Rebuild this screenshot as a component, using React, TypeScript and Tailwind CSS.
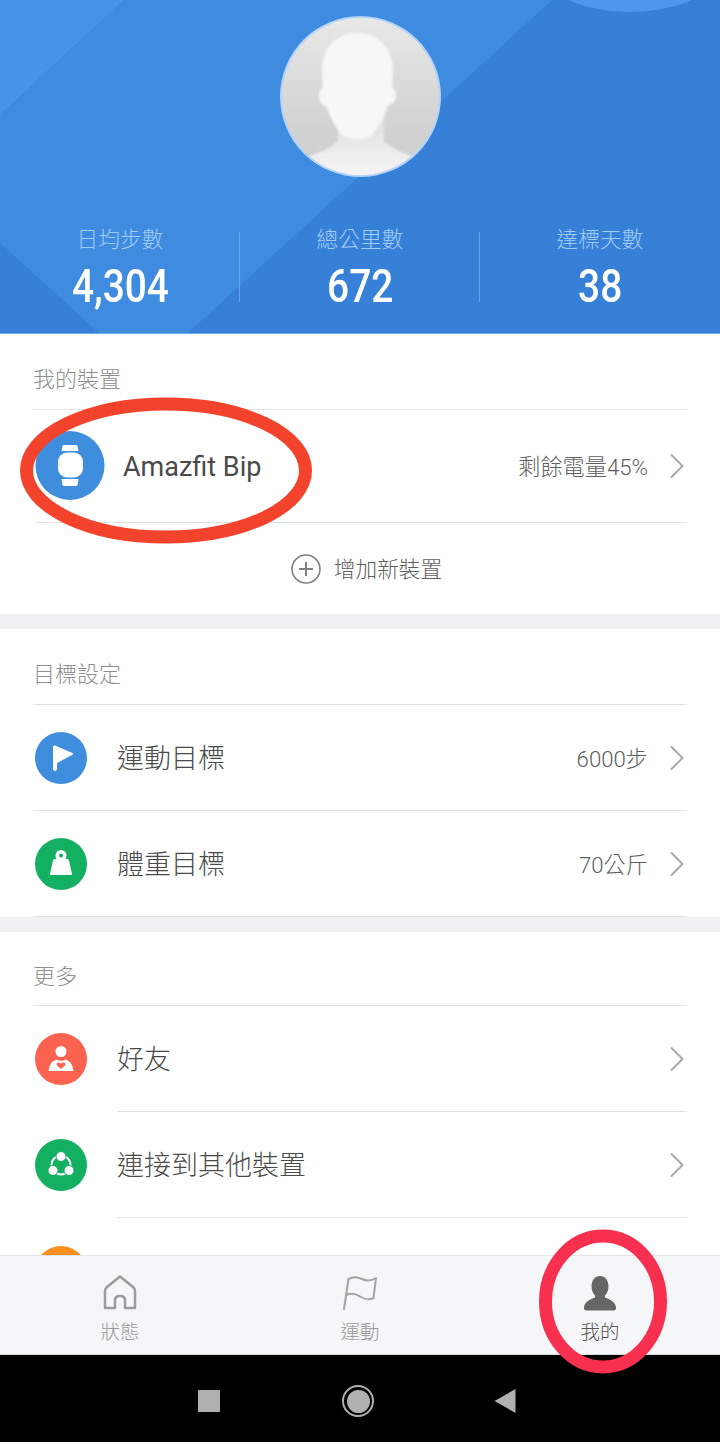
import { ChevronRight } from "lucide-react";
import type { ReactNode } from "react";

const FONT = { fontFamily: 'Roboto, "Noto Sans CJK TC", sans-serif' };

/* ── Icons ───────────────────────────────────────────────── */
function WatchIcon() {
  return (
    <svg viewBox="0 0 70 70" className="w-full h-full">
      <circle cx="35" cy="34.500" r="34.500" fill="#3f8ede" />
      <path d="M26.500 20l.8-4.500q.3-1.500 1.800-1.500h11.800q1.500 0 1.800 1.500l.8 4.500z" fill="#fff" />
      <path d="M26.500 48l.8 5.500q.3 1.500 1.800 1.500h11.800q1.500 0 1.800-1.500l.8-5.500z" fill="#fff" />
      <rect x="23" y="21.500" width="25" height="25" rx="9" fill="#fff" />
    </svg>
  );
}

function FlagIcon() {
  return (
    <svg viewBox="0 0 52 52" className="w-full h-full">
      <circle cx="26" cy="26" r="26" fill="#3f8ede" />
      <path d="M18 15q0-2 2-1.500l17.500 7.500q1.500.9 0 1.800L22 31v6q0 2-2 2t-2-2z" fill="#fff" />
    </svg>
  );
}

function WeightIcon() {
  return (
    <svg viewBox="0 0 52 52" className="w-full h-full">
      <circle cx="26" cy="26" r="26" fill="#14b061" />
      <circle cx="26" cy="17.500" r="5.500" fill="#fff" />
      <path d="M19.500 21h13q1.200 0 1.500 1.500l3 13.500q.2 1-1 1H16q-1.200 0-1-1l3-13.500q.3-1.500 1.500-1.500z" fill="#fff" />
      <circle cx="26" cy="17.500" r="2" fill="#14b061" />
    </svg>
  );
}

function FriendIcon() {
  return (
    <svg viewBox="0 0 52 52" className="w-full h-full">
      <circle cx="26" cy="26" r="26" fill="#fb6350" />
      <circle cx="26" cy="18.500" r="5.500" fill="#fff" />
      <path d="M13.500 38q.5-8 7.500-11.500 5 2.500 10 0 7 3.500 7.500 11.500z" fill="#fff" />
      <path d="M26 36l-4-3.600q-1-2.400 1.500-2.900 1.600-.1 2.500 1.300.9-1.400 2.500-1.300 2.500.5 1.500 2.900z" fill="#fb6350" />
    </svg>
  );
}

function ShareIcon() {
  return (
    <svg viewBox="0 0 52 52" className="w-full h-full">
      <circle cx="26" cy="26" r="26" fill="#14b061" />
      <circle cx="26" cy="26" r="9.500" fill="none" stroke="#fff" strokeWidth="2" />
      <circle cx="26" cy="17.500" r="5" fill="#fff" stroke="#14b061" />
      <circle cx="18" cy="31.500" r="5" fill="#fff" stroke="#14b061" />
      <circle cx="34" cy="31.500" r="5" fill="#fff" stroke="#14b061" />
    </svg>
  );
}

/* ── Header ──────────────────────────────────────────────── */
function HeaderBackdrop() {
  return (
    <svg viewBox="0 0 720 333" className="absolute inset-0 w-full h-full">
      <polygon points="0,0 124,0 0,115" fill="#4694ea" />
      <polygon points="124,0 552,0 188,333 99,333 0,243 0,115" fill="#3f8be0" />
      <ellipse cx="630" cy="-48" rx="102" ry="60" fill="#5096ec" />
    </svg>
  );
}

function Avatar() {
  return (
    <svg viewBox="0 0 161 161" className="w-[161px] h-[161px]">
      <defs>
        <linearGradient id="face" x1="0" y1="0" x2="0" y2="1">
          <stop offset="0" stopColor="#e8e8e8" />
          <stop offset="0.7" stopColor="#d2d2d2" />
          <stop offset="1" stopColor="#cfcfcf" />
        </linearGradient>
        <linearGradient id="bust" x1="0" y1="0" x2="0" y2="1">
          <stop offset="0" stopColor="#dedede" />
          <stop offset="0.5" stopColor="#ebebeb" />
          <stop offset="1" stopColor="#f6f6f6" />
        </linearGradient>
        <clipPath id="disc">
          <circle cx="80.500" cy="80.500" r="78.500" />
        </clipPath>
        <filter id="soft">
          <feGaussianBlur stdDeviation="1.300" />
        </filter>
      </defs>
      <circle cx="80.500" cy="80.500" r="80.500" fill="#b3d4f8" />
      <circle cx="80.500" cy="80.500" r="78.500" fill="url(#face)" />
      <g clipPath="url(#disc)" filter="url(#soft)">
        <path d="M58 100v25q-8 8-28 15l-8 24h118l-9-24q-20-7-27-15v-25z" fill="url(#bust)" />
        <path
          d="M77 17C56 17 42 32 42 55l1 17c-5 0-5 13-1 16l5 4c5 14 12 26 18 29q12 4 24 0c7-5 15-18 19-31l5-3c4-3 4-15-1-15l1-17C113 32 98 17 77 17z"
          fill="#f7f7f7"
        />
      </g>
    </svg>
  );
}

function Stat({ label, value, divider }: { label: string; value: string; divider?: boolean }) {
  return (
    <div className="relative flex-1 flex flex-col items-center">
      <div className="h-[44px] mb-[1px] leading-[48px] text-[21.700px] font-light text-[#a3ccf5]">{label}</div>
      <div className="h-[50px] leading-[50px] text-[46px] font-medium text-white scale-x-[0.845]">{value}</div>
      {divider && <div className="absolute right-0 top-[16px] h-[70px] w-px bg-[#6aa5e6]" />}
    </div>
  );
}

function Header() {
  return (
    <div className="relative h-[334px] shrink-0 overflow-hidden bg-[#3680d8] border-b border-[#6fb0e8]">
      <HeaderBackdrop />
      <div className="relative flex flex-col items-center pt-[16px]">
        <Avatar />
        <div className="flex w-full mt-[39px]">
          <Stat label="日均步數" value="4,304" divider />
          <Stat label="總公里數" value="672" divider />
          <Stat label="達標天數" value="38" />
        </div>
      </div>
    </div>
  );
}

/* ── List parts ──────────────────────────────────────────── */
function Chevron() {
  return <ChevronRight size={44} strokeWidth={1.100} className="ml-[7px] mr-[-12px] shrink-0 text-[#a8a8a8]" />;
}

function SectionTitle({ children, short }: { children: ReactNode; short?: boolean }) {
  return (
    <div
      className={`mx-[33px] leading-[30px] text-[22px] font-light text-[#8f8f8f] border-b border-[#e2e2e2] ${
        short ? "h-[74px] pt-[30px]" : "h-[76px] pt-[31px]"
      }`}
    >
      {children}
    </div>
  );
}

function Row({
  icon,
  label,
  value,
  inset,
}: {
  icon: ReactNode;
  label: string;
  value?: string;
  inset?: boolean;
}) {
  return (
    <div className="relative h-[106px] ml-[35px] mr-[33px] flex items-center">
      <div className="w-[52px] h-[52px] shrink-0">{icon}</div>
      <div className="ml-[30px] mt-[3px] text-[27px] font-light text-[#4a4a4a]">{label}</div>
      <div className="ml-auto mt-[3px] text-[22.200px] font-light text-[#5e5e5e]">{value}</div>
      <Chevron />
      <div className={`absolute bottom-0 right-0 h-px bg-[#e2e2e2] ${inset ? "left-[82px]" : "left-[-2px]"}`} />
    </div>
  );
}

function Gap() {
  return <div className="h-[15px] shrink-0 bg-[#eff0f2]" />;
}

/* ── Bottom bars ─────────────────────────────────────────── */
function TabBar() {
  return (
    <div className="h-[100px] shrink-0 flex bg-[#f5f6f8] border-t border-[#e4e4e4] border-b border-b-[#d8d8d8]">
      <div className="flex-1 flex flex-col items-center pt-[19px]">
        <svg viewBox="0 0 34 36" className="w-[34px] h-[36px]" fill="none" stroke="#9c9c9c" strokeWidth="2.500" strokeLinejoin="round">
          <path d="M2 16q0-2.500 2-4L17 1.500 30 12q2 1.500 2 4v17H22v-8q0-4-5-4t-5 4v8H2z" />
        </svg>
        <div className="mt-[10px] text-[19.500px] leading-[24px] font-light text-[#9a9a9a]">狀態</div>
      </div>
      <div className="flex-1 flex flex-col items-center pt-[19px]">
        <svg viewBox="0 0 34 36" className="w-[34px] h-[36px]" fill="none" stroke="#a3a3a3" strokeWidth="2" strokeLinecap="round" strokeLinejoin="round">
          <path d="M1 34L5.500 4C11 1 15 2 19 4s9 2 14-1l-2.500 20c-5.500 3-9.500 1-13.500-1.500S8 18 3.500 20" />
        </svg>
        <div className="mt-[10px] text-[19.500px] leading-[24px] font-light text-[#9a9a9a]">運動</div>
      </div>
      <div className="flex-1 flex flex-col items-center pt-[19px]">
        <svg viewBox="0 0 34 36" className="w-[34px] h-[36px]" fill="#666">
          <path d="M17 1c5.500 0 8.500 5 8.500 10.500 0 4-1.500 7-3.500 9v2c5 2 10 4 11 9.500.2 2-.5 3.500-2 3.500H3c-1.500 0-2.200-1.500-2-3.500 1-5.500 6-7.500 11-9.500v-2c-2-2-3.500-5-3.500-9C8.500 6 11.500 1 17 1z" />
        </svg>
        <div className="mt-[10px] text-[19.500px] leading-[24px] font-light text-[#555]">我的</div>
      </div>
    </div>
  );
}

function NavBar() {
  return (
    <div className="h-[87px] shrink-0 bg-black relative">
      <div className="absolute left-[198px] top-[35px] w-[22px] h-[22px] bg-[#b0b0b0] rounded-[1px]" />
      <div className="absolute left-[342px] top-[30px] w-[32px] h-[32px] rounded-full border-2 border-[#b0b0b0] flex items-center justify-center">
        <div className="w-[23px] h-[23px] rounded-full bg-[#b0b0b0]" />
      </div>
      <svg viewBox="0 0 22 26" className="absolute left-[494px] top-[33px] w-[22px] h-[26px]">
        <path d="M21.500 1v24L.5 13z" fill="#b0b0b0" />
      </svg>
    </div>
  );
}

/* ── Page ────────────────────────────────────────────────── */
export default function App() {
  return (
    <div className="relative w-[720px] h-[1442px] overflow-hidden flex flex-col bg-white" style={FONT}>
      <div className="flex-1 min-h-0 overflow-hidden">
        <Header />

        <div className="h-[280px]">
          <SectionTitle>我的裝置</SectionTitle>
          <div className="relative h-[113px] ml-[35px] mr-[33px] flex items-center border-b border-[#e2e2e2]">
            <div className="w-[70px] h-[70px] shrink-0">
              <WatchIcon />
            </div>
            <div className="ml-[18px] mt-[2px] text-[27px] text-[#4a4a4a]">Amazfit Bip</div>
            <div className="ml-auto mt-[3px] text-[22.200px] font-light text-[#5e5e5e]">剩餘電量45%</div>
            <Chevron />
          </div>
          <div className="h-[91px] flex items-center justify-center pl-[13px]">
            <svg viewBox="0 0 30 30" className="w-[30px] h-[30px] mr-[13px]" fill="none" stroke="#808080" strokeWidth="1.600">
              <circle cx="15" cy="15" r="14" />
              <path d="M8 15h14M15 8v14" strokeWidth="2" />
            </svg>
            <span className="mt-[3px] text-[21.700px] font-light text-[#5e5e5e]">增加新裝置</span>
          </div>
        </div>

        <Gap />

        <SectionTitle>目標設定</SectionTitle>
        <Row icon={<FlagIcon />} label="運動目標" value="6000步" />
        <Row icon={<WeightIcon />} label="體重目標" value="70公斤" />

        <Gap />

        <SectionTitle short>更多</SectionTitle>
        <Row icon={<FriendIcon />} label="好友" inset />
        <Row icon={<ShareIcon />} label="連接到其他裝置" inset />
        <div className="ml-[35px] mt-[28px] w-[52px] h-[52px] rounded-full bg-[#fb8f1d]" />
      </div>

      <TabBar />
      <NavBar />

      {/* hand drawn marks over the screenshot */}
      <svg viewBox="0 0 720 1442" className="absolute inset-0 w-full h-full pointer-events-none" fill="none">
        <ellipse cx="166" cy="470.500" rx="139.500" ry="66.500" stroke="#f4432c" strokeWidth="13" />
        <ellipse cx="603" cy="1301.500" rx="57.500" ry="65.500" stroke="#f8304f" strokeWidth="13" />
      </svg>
    </div>
  );
}
